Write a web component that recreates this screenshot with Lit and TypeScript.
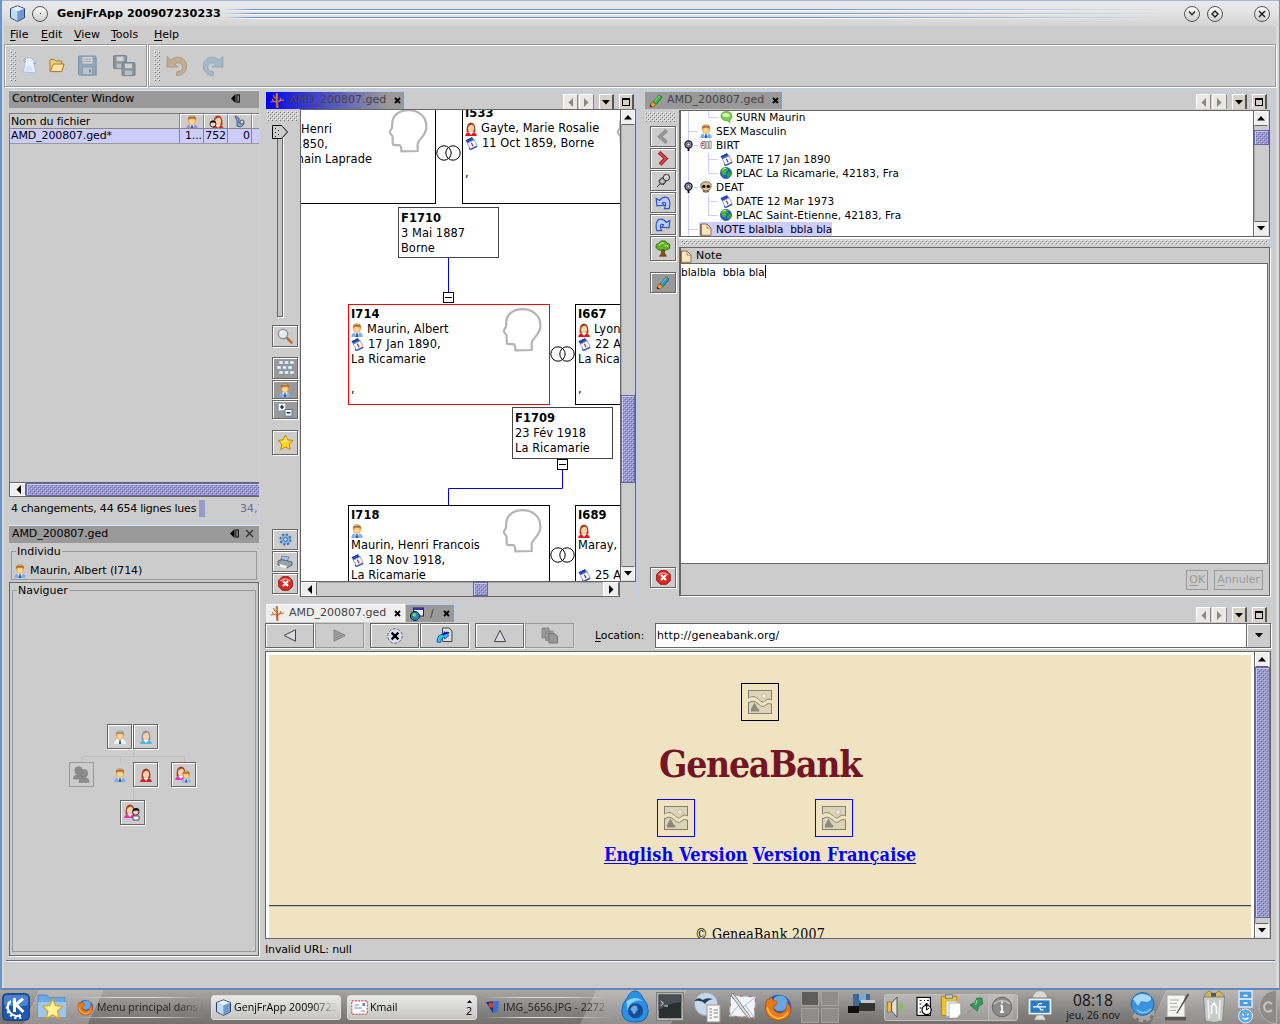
import { LitElement, html, svg, css, nothing } from "lit";
import { customElement } from "lit/decorators.js";
import { styleMap } from "lit/directives/style-map.js";

type Box = { x: number; y: number; w?: number; h?: number };

const at = (b: Box) =>
  styleMap({
    left: `${b.x}px`,
    top: `${b.y}px`,
    ...(b.w ? { width: `${b.w}px` } : {}),
    ...(b.h ? { height: `${b.h}px` } : {}),
  });

const icon = (w: number, h: number, vb: string, body: unknown) =>
  html`<svg class="ic" width=${w} height=${h} viewBox=${vb}>${body}</svg>`;

/* ---------- people ---------- */
const manBody = (hair = "#a8672e", coat = "#7fb0e6", face = "#f0a04c", x = 0, y = 0) => svg`
  <g transform="translate(${x} ${y})">
    <path d="M0.3 14 Q0.2 9.8 4 9.2 L8 9.2 Q11.8 9.8 11.7 14Z" fill=${coat}/>
    <path d="M3.2 9.2 L6 13.8 L8.8 9.2Z" fill="#fff"/>
    <path d="M5.4 10 h1.2 l.5 4 h-2.2z" fill="#2d5c9c"/>
    <ellipse cx="6" cy="5.6" rx="3.9" ry="4.1" fill=${face}/>
    <ellipse cx="6" cy="6.4" rx="2.7" ry="2.4" fill="#ffd890"/>
    <path d="M1.8 5.6 Q1.4 0.4 6 .4 Q10.6 .4 10.2 5.6 Q9.6 3.8 8.4 3.4 L3.6 3.4 Q2.4 3.8 1.8 5.6Z" fill=${hair}/>
    <path d="M3.4 1.8 Q6 .8 8.4 1.8" stroke="#fff" stroke-opacity=".5" stroke-width=".9" fill="none"/>
  </g>`;
const womanBody = (hair = "#9c3a22", coat = "#e01818", x = 0, y = 0) => svg`
  <g transform="translate(${x} ${y})">
    <path d="M1.6 10.6 Q.9 .4 6 .4 Q11.1 .4 10.4 10.6Z" fill=${hair}/>
    <path d="M.2 14 Q.2 11 3.4 10.4 L8.6 10.4 Q11.8 11 11.8 14Z" fill=${coat}/>
    <path d="M3.2 9.6 L6 13 L8.8 9.6Z" fill="#fff"/>
    <ellipse cx="6" cy="6" rx="3.1" ry="4" fill="#fdd0a4"/>
    <path d="M3 6 Q4 2.8 7.6 2.6 L9.2 5 Q8.8 1.2 6 1.1 Q3 1.2 3 6Z" fill=${hair}/>
  </g>`;
const man = (hair?: string, coat?: string) => icon(12, 14, "0 0 12 14", manBody(hair, coat));
const woman = (hair?: string, coat?: string) => icon(12, 14, "0 0 12 14", womanBody(hair, coat));

const couple = icon(17, 17, "0 0 17 17", svg`${womanBody("#a3402a", "#ec2fb4", 0, 0)}<g transform="translate(6 4.5) scale(.86)">${manBody("#a8672e", "#8ab8f0")}</g>`);
const child = icon(17, 17, "0 0 17 17", svg`${womanBody("#a3402a", "#ec2fb4", 0, 0)}
  <circle cx="11.8" cy="8" r="3.2" fill="#f9c4d0" stroke="#111" stroke-width=".8"/><path d="M8.4 7.4 Q8.6 4 12 4 Q15.4 4 15.4 7 Q12 5.6 8.4 7.4Z" fill="#111"/>
  <path d="M9 12 h6 v4 h-6z" fill="#fff" stroke="#333" stroke-width=".8"/>`);
const motherBaby = icon(14, 13, "0 0 14 13", svg`<g transform="translate(3 0)">${womanBody("#a3402a", "#e42828", 0, 0)}</g>
  <circle cx="4" cy="9" r="3" fill="#fdd8d0" stroke="#111" stroke-width=".8"/><path d="M1 8.4 Q1 5.4 4 5.4 Q7 5.4 7 8 Q4 6.800 1 8.4Z" fill="#111"/>`);
const shadowPair = icon(17, 17, "0 0 17 17", svg`<g fill="#8c8c8c" stroke="#7c7c7c" stroke-width=".6">
  <circle cx="5.5" cy="4.5" r="3.8"/><path d="M.5 13 Q.5 8.6 5.5 8.6 Q10 8.6 10.5 13Z"/>
  <circle cx="11" cy="7.4" r="3.8"/><path d="M6 16.4 Q6 11.6 11 11.6 Q16 11.6 16 16.4Z"/></g>`);

/* ---------- record icons ---------- */
const dateIcon = icon(13, 13, "0 0 13 13", svg`
  <path d="M.6 3.8 L7 .6 L9.6 3 L2.6 6.6Z" fill="#2850c0"/><path d="M.8 3.6 L7.2 .6" stroke="#0d2b80" stroke-width="1"/>
  <path d="M2.2 6.2 L9.2 2.8 L12.2 8.6 L5.4 12Z" fill="#f4f7fc" stroke="#7d93c4" stroke-width=".8"/>
  <path d="M6.4 5.8 L8 9.2" stroke="#c22" stroke-width="1.2"/><path d="M4 9.8 L5.4 12 L12 8.8 L12.5 10 L6 13 L4.2 12.4Z" fill="#2c50b0"/>`);
const globe = icon(12, 12, "0 0 12 12", svg`<circle cx="6" cy="6" r="5.6" fill="#1d66c8" stroke="#173f70" stroke-width=".6"/>
  <path d="M1 4.2 Q3 .6 7 .8 L8.2 3 L6 5 L6.4 7 L4 8.4 L2 6.6Z" fill="#44b834"/><path d="M8 5.4 L11.2 5 Q11.4 8.8 8.4 10.8 L7 8Z" fill="#38a42c"/>
  <path d="M2.4 3 Q4 1 6 1.4" stroke="#b8f07c" fill="none"/>`);
const bubble = icon(13, 12, "0 0 13 12", svg`<path d="M6.5 .6 C10 .6 12 2.6 12 5 C12 7.6 10.8 8.8 9.6 9.2 L10.2 11.4 L7 9.6 C3 9.8 1 7.6 1 5 C1 2.6 3 .6 6.5 .6Z" fill="#7ccf4c" stroke="#4b9a2a" stroke-width=".7"/>
  <ellipse cx="6" cy="4" rx="3.6" ry="2" fill="#d7f6b8"/>`);
const birth = icon(12, 10, "0 0 12 10", svg`<path d="M1 3 Q2 1 5 1.4 L5 8.4 Q2 9 1 7Z" fill="#fff" stroke="#555" stroke-width=".8"/><path d="M1.8 3.4 h2 M1.8 5.4 h2" stroke="#d23" stroke-width="1.3"/>
  <path d="M6 1.6 h2.4 v7 h-2.4z M9 1 h2.2 v7.4 h-2.2z" fill="#e4e4e4" stroke="#777" stroke-width=".7"/>`);
const skull = icon(12, 12, "0 0 12 12", svg`<path d="M6 .8 C10 .8 11.4 3 11.2 5.2 C11 7.4 9.6 8 9 8.2 L8.6 11 L3.4 11 L3 8.2 C2.4 8 1 7.4 .8 5.2 C.6 3 2 .8 6 .8Z" fill="#d8c49a" stroke="#5b4525" stroke-width=".8"/>
  <circle cx="3.8" cy="5.4" r="1.7" fill="#1c1408"/><circle cx="8.2" cy="5.4" r="1.7" fill="#1c1408"/><path d="M4.4 9 v1.6 M6 9 v1.6 M7.6 9 v1.6" stroke="#3a2a10" stroke-width=".7"/>`);
const noteIcon = icon(12, 13, "0 0 12 13", svg`<path d="M1 1 H7 L11 5 V12.3 H1Z" fill="#fbe6c0" stroke="#8f6a3c" stroke-width=".9"/><path d="M7 1 V5 H11Z" fill="#fff" stroke="#8f6a3c" stroke-width=".8"/><path d="M1 1 V12.3" stroke="#5d4020"/>`);
const pen = (a: string, b: string) => icon(14, 14, "0 0 14 14", svg`<path d="M4 8 L10.4 1 L13 3.2 L7 10.6Z" fill=${a} stroke=${b} stroke-width=".8"/><path d="M5.2 7.4 L10.8 1.6" stroke="#dff" stroke-width=".7" stroke-opacity=".8"/>
  <path d="M4 8 L7 10.6 L4.4 12.8 L1.2 12.6 L1.6 9.6Z" fill="#f0a030" stroke="#8a4a10" stroke-width=".7"/><path d="M1 10.8 L1 13 L3.4 13Z" fill="#222"/>`);
const treeIcon = icon(15, 15, "0 0 15 15", svg`<g stroke="#c87a3c" fill="none" stroke-linecap="round"><path d="M7.4 14.4 Q6.6 8 6.8 4 L6.8 1" stroke-width="2.2"/><path d="M6.8 9 Q3 9 2.4 6.4 M6.8 6 Q4 5 3.6 2.6 M1 9 L4 8.4 M7 9.4 Q10.6 8.4 11 5.4 M10 7.6 L13.6 7" stroke-width="1.2"/></g>
  <path d="M7.8 13 Q7.4 8 7.8 5" stroke="#8a4418" stroke-width=".6" fill="none"/>`);
const headShape = (x: number, y: number) => html`<svg class="abs" style=${at({ x, y })} width="40" height="45" viewBox="0 0 40 45">
  <path d="M4.3 13.5 C5 5.5 12 1.2 20.5 1.2 C31 1.2 38.4 8 38.4 17.5 C38.4 27 30.6 29.5 29.6 35 L29.8 42 L13.4 42.4 Q13.4 37 11.4 36 Q7.6 36.4 5 35.6 Q4.6 34 4.6 27.4 L1.8 23.6 Q1.6 22.6 4 18.6 Z" fill="none" stroke="#b4b4b4" stroke-width="2.2" stroke-linejoin="round"/></svg>`;
const cube = (s: number) => icon(s, s, "0 0 16 16", svg`<path d="M8 .8 L14.6 3.4 V12 L8 15.4 L1.4 12 V3.4Z" fill="#8db4dd" stroke="#243c66" stroke-width=".9"/>
  <path d="M8 1.2 L14 3.6 L8 6 L2 3.6Z" fill="#e5f2fc"/><path d="M8 6 V15 L2 11.8 V3.8Z" fill="#c3dcf2"/><path d="M8 6 V15 L14 11.8 V3.8Z" fill="#6f99cf"/>`);
const broken = html`<svg class="ic" width="26" height="26" viewBox="0 0 26 26"><rect x="1.5" y="1.5" width="23" height="23" fill="#dcd3b8" stroke="#857f71"/>
  <circle cx="17" cy="7" r="2.4" fill="#f3e9cc" stroke="#b8b09a" stroke-width=".7"/>
  <path d="M1 10 Q6 5 11 10 T18 12 Q22 8 25 12" fill="none" stroke="#8a8474" stroke-width="1"/>
  <path d="M0 12 Q6 7.500 11 12.400 T18 14.200 Q22 11.400 26 13.500" fill="none" stroke="#efe3c1" stroke-width="3"/>
  <path d="M1 14.6 Q6 9.800 11 14.6 T18 16.4 Q22 13 25 16" fill="none" stroke="#8a8474" stroke-width="1"/>
  <path d="M7.5 13.5 L11 20 H12.2 V22.500 H4 V20 Z" fill="#8f8979"/></svg>`;

const arrow = (dir: "up" | "down" | "left" | "right", fill = "#000") => {
  const p = { up: "M4 0 L8 4.5 H0Z", down: "M0 0 H8 L4 4.5Z", left: "M5 0 V9 L.5 4.5Z", right: "M0 0 V9 L4.5 4.5Z" }[dir];
  const v = dir === "up" || dir === "down";
  return icon(v ? 8 : 5, v ? 5 : 9, v ? "0 0 8 5" : "0 0 5 9", svg`<path d=${p} fill=${fill}/>`);
};
const tabX = (c = "#000") => icon(7, 7, "0 0 7 7", svg`<path d="M1 1 L6 6 M6 1 L1 6" stroke=${c} stroke-width="1.8"/>`);
const dockMark = icon(9, 9, "0 0 9 9", svg`<path d="M4.5 0 V9 L0 4.5Z" fill="#000"/><rect x="5.9" y=".9" width="2.4" height="7.2" fill="none" stroke="#000"/>`);
const redClose = icon(15, 15, "0 0 15 15", svg`<path d="M4.5 .7 H10.5 L14.3 4.5 V10.5 L10.5 14.3 H4.5 L.7 10.5 V4.5Z" fill="#dc2820" stroke="#8e100c" stroke-width=".9"/><path d="M2.4 5 Q7 1 12.4 5" stroke="#ff9a8c" stroke-width="1.4" fill="none"/><path d="M5 5 L10 10 M10 5 L5 10" stroke="#fff" stroke-width="2.2"/>`);

const curl = (c: string, dark: string, flip = false) => icon(22, 22, "0 0 22 22", svg`<g transform=${flip ? "translate(22 0) scale(-1 1)" : ""}>
  <path d="M1 1.500 L5 5 Q10 .6 16 3 Q22 7 20.400 14 Q17.6 20.800 10.6 20.8 V16.8 Q15.600 16.4 16.400 12.600 Q16.600 8.600 13 7.800 Q10.600 7.600 9 9 L12 12 H1Z" fill=${c} stroke=${dark} stroke-width=".8"/></g>`);
const blueCurl = (flip = false) => icon(16, 15, "0 0 22 22", svg`<g transform=${flip ? "translate(22 0) scale(-1 1)" : ""}>
  <path d="M1 5 L6 8 Q11 1 18 4 Q23 9 20 20 H13 Q17 11 12.6 10.6 Q10.6 10.6 10 11.8 L13 15 L2 16Z" fill="#b9cdf8" stroke="#3450c8" stroke-width="1.7"/></g>`);

const diskette = icon(22, 22, "0 0 22 22", svg`<path d="M2 3 H20 V21 H4 Z" fill="#aeb2b6"/><rect x="1.5" y="1" width="17.5" height="19" rx="1" fill="#93a8bb" stroke="#7c90a3"/>
  <rect x="5" y="1.5" width="11" height="7.5" fill="#d4d8da" stroke="#8497a8" stroke-width=".7"/><path d="M6.5 4 H14.5 M6.5 6.4 H14.5" stroke="#96a0a8"/>
  <rect x="5.5" y="12" width="10" height="7.6" fill="#bac4cc" stroke="#8497a8" stroke-width=".7"/><rect x="12" y="14.4" width="2" height="3" fill="#7c90a3"/>`);
const twoDisks = icon(23, 22, "0 0 23 22", svg`${[[0.6, 0.6], [9, 7.6]].map(([x, y]) => svg`<g transform="translate(${x} ${y})"><rect width="13" height="13" rx="1" fill="#8c949b" stroke="#747b82" stroke-width=".9"/><rect x="3" y="1" width="7" height="4.6" fill="#cdd1d3"/><rect x="3" y="8" width="7" height="4.6" fill="#b8bfc4"/></g>`)}`);
const newFile = icon(15, 17, "0 0 15 17", svg`<path d="M3 1 H8.6 L12 3.4 L12.4 8 L13.8 15.8 L.8 15 L2.8 9Z" fill="#eaf1fc" stroke="#a6bce0" stroke-width=".9"/><path d="M1 3 L4 5 M11 6 L14 7 M2.4 1.4 L4 3" stroke="#7ea3e0" stroke-width="1"/><path d="M4 10 L8 8 L11.500 14.500 L3 14Z" fill="#d3e0f8"/>`);
const openFile = icon(16, 15, "0 0 16 15", svg`<path d="M1 13.4 V2.4 Q1 1.4 2 1.4 H5.4 L7 3 H12.6 V6" fill="#f0cf84" stroke="#a8782c"/><path d="M1.4 13.6 L4.4 6 H15 L12.8 13.6Z" fill="#fbe3a6" stroke="#a8782c"/>`);

const gear = icon(13, 13, "0 0 13 13", svg`<circle cx="6.5" cy="6.5" r="4.9" fill="#86b2e4" stroke="#3f6fae" stroke-dasharray="2.2 1.6" stroke-width="2.4"/><circle cx="6.5" cy="6.5" r="4.2" fill="#86b2e4"/><circle cx="6.5" cy="6.5" r="1.9" fill="#cfe0f4" stroke="#34629c"/>`);
const printer = icon(16, 14, "0 0 16 14", svg`<path d="M5 1 L12 2 L10 7 L4 5Z" fill="#a5c3e8" stroke="#55606c" stroke-width=".6"/><path d="M1 6 L5 4.6 L15 7 V10 L10 13 L1 10Z" fill="#9ca2a8" stroke="#3c4044" stroke-width=".7"/><path d="M3 9 L10 11 L9 13.4 L2.4 11.6Z" fill="#f2f2f2"/>`);
const lens = icon(16, 16, "0 0 16 16", svg`<path d="M9.4 9.4 L14.6 14.6" stroke="#c46a24" stroke-width="2.4" stroke-linecap="round"/><circle cx="6" cy="6" r="4.7" fill="#e4eaee" stroke="#8c8c8c" stroke-width="1.3"/><path d="M3.4 5.6 Q4 3.4 6 3.2" stroke="#fff" fill="none" stroke-width="1.2"/>`);
const star = (s: number) => icon(s, s, "0 0 17 17", svg`<path d="M8.5 1 L10.8 5.8 L16 6.5 L12.2 10.2 L13.2 15.6 L8.5 13 L3.8 15.6 L4.8 10.2 L1 6.5 L6.2 5.8Z" fill="#ffd61c" stroke="#bd7d00" stroke-width=".9"/><path d="M8.5 3 L9.8 6.8 L5 8" stroke="#fff6b0" fill="none"/>`);
const bricks = icon(17, 16, "0 0 17 16", svg`<g fill="#f4f8fc" stroke="#7b98b8" stroke-width=".5">${[[2, 1], [7.5, 1], [13, 1], [0, 6], [5.5, 6], [11, 6], [2, 11], [7.5, 11], [13, 11]].map(([x, y]) => svg`<rect x=${x} y=${y} width="4" height="3"/>`)}</g>`);
const plusMinus = icon(15, 14, "0 0 15 14", svg`<rect x=".5" y=".5" width="7" height="7" fill="#fff" stroke="#9ab6d2"/><path d="M4 2 V6 M2 4 H6" stroke="#000" stroke-width="1.2"/><rect x="7" y="6.5" width="7" height="6.6" fill="#fff" stroke="#4878a8"/><path d="M8.6 9.8 H12.4" stroke="#000" stroke-width="1.3"/>`);
const chevron = (dir: "l" | "r", c: string, d: string) => icon(12, 15, "0 0 12 15", svg`<path d=${dir === "l" ? "M9.6 1.4 L3 7.5 L9.6 13.6" : "M2 1.4 L8.8 7.5 L3 13.6"} fill="none" stroke=${d} stroke-width="3.6"/><path d=${dir === "l" ? "M9.6 1.4 L3 7.5 L9.6 13.6" : "M2 1.4 L8.8 7.5 L3 13.6"} fill="none" stroke=${c} stroke-width="2"/>`);
const pin = icon(15, 15, "0 0 15 15", svg`<path d="M1 14 L5 10" stroke="#333"/><path d="M3.4 7 L8 11.4" stroke="#333" stroke-width="2.4"/><ellipse cx="6.6" cy="8" rx="3.4" ry="2.8" fill="#bbb" stroke="#333" transform="rotate(-40 6.6 8)"/><circle cx="10.4" cy="4.6" r="3.2" fill="#ccc" stroke="#333"/><path d="M9 4.6 Q9.6 3 11.4 3.2" stroke="#fff" fill="none"/>`);
const oak = icon(16, 17, "0 0 16 17", svg`<path d="M6.4 8 H9.6 L9.4 13 L11.4 16.2 H4.6 L6.6 13Z" fill="#8a5018" stroke="#4a2808" stroke-width=".6"/><path d="M3 9.4 Q.4 8.4 1 5.6 Q1.4 3.4 3.8 3.4 Q5 .6 8 .8 Q11 .4 12.2 3 Q15.4 3.4 15 6.6 Q15 9.4 12 9.4 Q10.6 11.4 8 9.6 Q5 11.4 3 9.4Z" fill="#62b024" stroke="#2c6410" stroke-width=".8"/><path d="M4 5.4 Q6 2 9 3.4 M9.6 6 Q12 4.4 13 6.6" stroke="#c0e86c" fill="none" stroke-width="1.2"/>`);

/* ---------- desktop panel icons ---------- */
const firefox = (s: number) => icon(s, s, "0 0 28 28", svg`<circle cx="14" cy="14" r="12.4" fill="#2a5cb0"/><circle cx="15.5" cy="10" r="7.6" fill="#6aa6e0"/>
  <path d="M3 6 Q5 7 7 4 Q8 7 12 8 Q14 10 11 12 Q8 13 10 17 Q14 21 19 18 Q23 15 22 9 Q27 13 25.6 19 Q22 27 13 26.6 Q2 25 1.4 14 Q1.4 9 3 6Z" fill="#e87818" stroke="#a8430c" stroke-width=".6"/><path d="M3 14 Q5 23 14 24.6 Q20 24 23 19" stroke="#fcc040" stroke-width="1.6" fill="none"/>`);
const kmenu = icon(28, 28, "0 0 28 28", svg`<rect x=".7" y=".7" width="26.6" height="26.6" rx="4" fill="#1d58ae" stroke="#0f397c"/><rect x="2" y="2" width="24" height="11" rx="3" fill="#5d93d8" opacity=".7"/>
  <path d="M12.500 5 V19 M21 5.6 L14 11.500 L21.400 19" stroke="#fff" stroke-width="3" fill="none"/><path d="M9 8 A7.500 7.500 0 0 0 9 20.4 A8.6 8.6 0 0 0 19 22" stroke="#fff" stroke-width="2" fill="none"/><path d="M7.600 9.600 A7.500 7.500 0 0 0 8 21 A8.6 8.6 0 0 0 19.500 23.500" stroke="#fff" stroke-width="3" stroke-dasharray="2 2.600" fill="none"/>`);
const starFolder = icon(32, 28, "0 0 32 28", svg`<path d="M2 2 H11 L13 4.6 H29 V23 H2Z" fill="#6ea9e6" stroke="#4a86c6" stroke-width=".8"/><path d="M2 9 H30 V24 H2Z" fill="#9cc6f2"/><g transform="translate(5.6 5) scale(1.3)"><path d="M8.5 1 L10.8 5.8 L16 6.5 L12.2 10.2 L13.2 15.6 L8.5 13 L3.8 15.6 L4.8 10.2 L1 6.5 L6.2 5.8Z" fill="#fff09a" stroke="#e0a010" stroke-width=".9"/></g>`);
const stamp = icon(17, 15, "0 0 17 15", svg`<rect x=".8" y=".8" width="15.4" height="13.4" fill="#fff" stroke="#d05048" stroke-width="1.2" stroke-dasharray="2 1.2"/><path d="M3.4 5 H8 M3.4 8 H11 M10 11 H14" stroke="#6a8cc4"/><rect x="11.5" y="3" width="2.5" height="3" fill="#5c84d0"/>`);
const photo = icon(15, 14, "0 0 15 14", svg`<path d="M1 2 L14 1 L13 12 L8 13Z" fill="#3a70d0"/><path d="M1 2 L8 1.6 L8 13Z" fill="#20306a"/><circle cx="6" cy="5" r="2.6" fill="#d43c30"/>`);
const drop = icon(30, 34, "0 0 30 36", svg`<path d="M15 1 Q20 1 23 8 Q29 14 29 22 Q29 34 15 34 Q1 34 1 22 Q1 14 7 8 Q10 1 15 1Z" fill="#2a90e4" stroke="#1564b4"/><path d="M6 12 Q15 5 24 12 Q19 10 15 12 Q9 14 7 22Z" fill="#8ed0fa"/><circle cx="15.6" cy="22" r="8" fill="#1a4c94"/><path d="M10 20 Q13 15 17 17 L18 21 L14 26Z" fill="#6aa8e4"/>`);
const terminal = icon(28, 31, "0 0 28 31", svg`<rect x=".6" y=".6" width="26.8" height="28" fill="#b9bbb9" stroke="#777"/><rect x="2.6" y="2.6" width="22.8" height="23.6" fill="#2b2e2f"/><path d="M2.6 2.6 H25.4 V10 Q10 12 2.6 18Z" fill="#4a4e50"/><path d="M4.6 9 L7.4 11.4 L4.6 13.8 M8.4 14 H12" stroke="#eee" fill="none"/>`);
const office = icon(29, 34, "0 0 29 34", svg`<circle cx="13" cy="14" r="11.6" fill="#c9d7e6" stroke="#96a8bc"/><path d="M1 11 Q5 6 10 10 Q13 7 20 9 Q14 10 12 14 Q9 10 1 11Z" fill="#26415e"/><rect x="14" y="15" width="13" height="17" fill="#f6f6f6" stroke="#999"/><path d="M16.4 19 H19 M16.4 22 H19 M16.4 25 H19 M16.4 28 H19 M20.6 20 H25 M20.6 23 H25 M20.6 27 H25" stroke="#777" stroke-width=".9"/>`);
const letter = icon(30, 32, "0 0 30 32", svg`<g transform="rotate(4 15 16)"><rect x="2" y="5" width="25" height="21" fill="#f2f5fa" stroke="#9fb0c8"/><rect x="2" y="5" width="25" height="21" fill="none" stroke="#cc6464" stroke-width="1.4" stroke-dasharray="3 6"/><path d="M2 5 L14 17 L27 5 M2 26 L11 14 M27 26 L17 14" stroke="#b4c2d6" fill="none"/></g><path d="M5 2 L21 24 L23.6 29 L19 26 L3 4Z" fill="#dcdcdc" stroke="#6e6e6e" stroke-width=".8"/>`);
const devices = icon(29, 28, "0 0 29 28", svg`<rect x="6" y="1" width="17" height="17" fill="#3f6894"/><path d="M12 1 H19 V7 L15.5 10 L12 7Z" fill="#7fa8d0"/><path d="M1 13 H12 V20 H1Z" fill="#111"/><path d="M12 10 H28 V18 H12Z" fill="#333"/><rect x="14" y="7" width="14" height="3" fill="#c8c8c8"/><path d="M16 21 H28 V26 H16Z" fill="#777" opacity=".5"/>`);
const speaker = icon(18, 24, "0 0 18 24", svg`<rect x=".6" y="7" width="4" height="10" fill="#f0b83c" stroke="#8a6010" stroke-width=".6"/><path d="M4.6 8 L10 2 V22 L4.6 16Z" fill="#e0e0e0" stroke="#555"/><path d="M12 8 Q14 12 12 16 M14 7 Q16.6 12 14 17" stroke="#72c836" fill="none" stroke-width="1.3"/>`);
const calendar = icon(17, 22, "0 0 17 22", svg`<rect x="1" y="1.4" width="13.4" height="18" fill="#fff" stroke="#000" stroke-width="1.1"/><path d="M3.6 4.4 h2 M8 4.4 h1 M11 4.4 h2 M3.6 8 h1.6 M3.6 12 h2 M3.6 16 h1.6" stroke="#000"/><circle cx="10.6" cy="14" r="4.6" fill="#fff" stroke="#000" stroke-width="1.2"/><path d="M10.6 14 V7 M10.6 14 L13 12 M10.6 7 L8.6 9.4 M10.6 7 L12.6 9.4" stroke="#000" fill="none"/>`);
const clipboard = icon(22, 26, "0 0 22 27", svg`<rect x="1" y="2.4" width="16" height="20" rx="1" fill="#f0c428" stroke="#a67c10"/><rect x="5.4" y=".8" width="7" height="4" fill="#c4c4c4" stroke="#666" stroke-width=".7"/><path d="M6 7.4 H18 V19 L14 23 H6Z" fill="#f2f2ee" stroke="#aaa" stroke-width=".7"/><path d="M9 9.4 H21 V20.6 L17 25 H9Z" fill="#fff" stroke="#999" stroke-width=".7"/>`);
const pushpin = icon(20, 24, "0 0 20 24", svg`<path d="M1 21 L8 13" stroke="#999" stroke-width="1.6"/><path d="M5 10 L12 16 Q14 13 12.6 12 L17.6 9 L17 3 L12 3 L9.6 8.6 Q8 7.6 5 10Z" fill="#3a9a5a" stroke="#1f6a3c" stroke-width=".7"/><path d="M12 5 L10.6 10" stroke="#a4e4b8"/>`);
const info = icon(22, 22, "0 0 22 22", svg`<circle cx="11" cy="11" r="9.8" fill="#8b8b8b" stroke="#666"/><path d="M3 8 Q11 1 19 8" stroke="#c4c4c4" stroke-width="1.6" fill="none"/><path d="M11 9.4 V16 M11 5.4 V7.4 M9 16.2 H13 M9.4 9.6 H11" stroke="#fff" stroke-width="1.7"/>`);
const usb = icon(28, 34, "0 0 28 34", svg`<circle cx="14" cy="8" r="7.4" fill="#dadada" stroke="#999"/><rect x="2" y="8" width="24" height="17" rx="1" fill="#f0f0f0" stroke="#777"/><rect x="4.4" y="10.4" width="19.2" height="12.4" fill="#2c7cc4"/><path d="M7 16.8 H20 M11 16.8 L13 13.6 H16 M13 16.8 L15 19.8 H17.6" stroke="#fff" fill="none" stroke-width="1.2"/><path d="M11 25 H17 L20 30 H8Z" fill="#ddd" stroke="#888" stroke-width=".6"/>`);
const netGlobe = icon(31, 34, "0 0 31 34", svg`<circle cx="16" cy="21" r="9" fill="#a9a9a9" stroke="#a4a4a4" stroke-width="5" stroke-dasharray="4 3"/><circle cx="15.6" cy="14" r="11.4" fill="#3a94dc" stroke="#2468a8"/><path d="M6 9 Q12 1 23 6 Q26 10 20 12 L14 11 L11 16Z" fill="#a6daf8"/><path d="M10 20 Q16 26 24 19" stroke="#88c8f4" fill="none" stroke-width="1.6"/>`);
const notes = icon(26, 32, "0 0 26 32", svg`<path d="M3 4 H21 V26 H3Z" fill="#f4f4f2" stroke="#a0a09c"/><path d="M6 9 H15 M6 12.4 H13 M6 16 H14 M6 19.4 H12" stroke="#aaa"/><path d="M24 2 L13 21 L12 23 L13.6 22 L25 4Z" fill="#4a4a4a"/><path d="M1 26 H22 V29.4 H1Z" fill="#585858"/>`);
const bin = icon(24, 34, "0 0 24 34", svg`<path d="M3 4 L7 1 L12 4 L17 1 L22 5 V9 H2Z" fill="#d2b45c" stroke="#77663a" stroke-width=".6"/><path d="M9 3 H14 V8 H9Z" fill="#555"/><path d="M1.4 7 H22.6 L20.6 31 Q12 34 3.4 31Z" fill="#c9cbca" stroke="#858585"/><path d="M6 10 L7 29 M18 10 L17 29" stroke="#efefef" stroke-width="1.6"/><path d="M9.6 24 V17 L12 13 L14.4 17 V24" stroke="#fff" fill="none" stroke-width="1.5"/>`);
const drawers = icon(15, 34, "0 0 15 34", svg`<rect x="1" y="1" width="13" height="16" fill="#4d9be0" stroke="#e8f2fa" stroke-width="1.3"/><path d="M1 9 H14" stroke="#fff" stroke-width="1.4"/><path d="M5.4 5.6 H9.6 M5.4 13 H9.6" stroke="#fff" stroke-width="1.6"/><circle cx="7.5" cy="26" r="7" fill="#5fa9e6" stroke="#e8f2fa"/><path d="M4.4 24 L6 25.6 M10.6 23.6 L9 25.2 M4.6 28 Q7.5 30.4 10.4 27.8" stroke="#fff" fill="none" stroke-width="1.3"/>`);

@customElement("app-root")
export class AppRoot extends LitElement {
  static styles = css`
    :host { display: block; width: 1280px; height: 1024px; overflow: hidden; position: relative;
      font: 11px/14px "DejaVu Sans", Verdana, sans-serif; color: #000; background: #ccc; }
    * { box-sizing: border-box; }
    div { white-space: nowrap; }
    span { white-space: pre; }
    .ic { display: block; flex: none; }
    .abs { position: absolute; display: block; }
    .row { display: flex; align-items: center; }
    :where(.row > i, .row > span, .toolbar > i, .hdr > i) { flex: none; }
    .col { display: flex; flex-direction: column; }
    .grow { flex: 1; min-width: 0; min-height: 0; }
    u { text-underline-offset: 2px; text-decoration-thickness: 1px; }

    /* window frame */
    .win { height: 990px; border-left: 2px solid #6b94c8; border-right: 1px solid #6b94c8; border-bottom: 2px solid #6287b8;
      background: #ccc; box-shadow: inset 2px 0 #d6d9dc, inset -3px 0 #d8dadc; }
    .title { height: 26px; padding: 1px 7px 0; background: linear-gradient(#9fb8d4 0, #9fb8d4 1px, #e9e9e9 1px, #e3e3e3 50%, #d3d3d3); }
    .title b { font-size: 11.2px; margin-left: 9px; letter-spacing: .04px; }
    .stripes { height: 10px; flex: 1; margin: 0 8px 0 3px; background:
      linear-gradient(#6a90c8 0 1px, #fff 1px 2px, transparent 2px 4px, #6a90c8 4px 5px, #fff 5px 6px, transparent 6px 8px, #6a90c8 8px 9px, #fff 9px 10px);
      -webkit-mask: linear-gradient(90deg, transparent, #000 3%, #000 60%, transparent 99%); }
    .round { width: 16px; height: 16px; border-radius: 50%; border: 1px solid #555; background: linear-gradient(#fafafa, #d0d0d0); display: grid; place-items: center; flex: none; }
    .menu { height: 18px; padding-left: 8px; }
    .menu span { display: block; }
    .toolrow { height: 43px; gap: 1px; padding: 0 3px 0 2px; }
    .toolbar { height: 43px; border: 1px solid #999; box-shadow: inset 1px 1px #fff, 1px 1px #fff; display: flex; align-items: center; padding: 0 0 0 5px; }
    .grip { background:
      conic-gradient(from 0deg at 1px 1px, transparent 75%, #fff 0) 0 0/4px 4px,
      conic-gradient(from 0deg at 1px 1px, transparent 75%, #777 0) 1px 1px/4px 4px,
      conic-gradient(from 0deg at 1px 1px, transparent 75%, #fff 0) 2px 2px/4px 4px,
      conic-gradient(from 0deg at 1px 1px, transparent 75%, #777 0) 3px 3px/4px 4px; }
    .main { height: 872px; padding: 3px 9px 0 6px; display: flex; gap: 4px; }

    /* left column */
    .left { width: 252px; padding-left: 1px; border-right: 1px solid #c3d3e3; flex: none; }
    .hdr { height: 18px; background: #999; border-top: 1px solid #dbe6f0; padding: 0 5px 2px 3px; display: flex; align-items: center; flex: none; width: 250px; }
    .hdr span { flex: 1; font-size: 11px; letter-spacing: -.08px; }
    .table { margin-top: 5px; height: 369px; border-top: 1px solid #777; border-left: 1px solid #777; width: 250px; flex: none; }
    .trow { display: grid; grid-template-columns: 170px 24px 24px 24px 7px; height: 14px; overflow: hidden; letter-spacing: -.12px; }
    .trow > div { border-right: 1px solid #888; overflow: hidden; height: 14px; line-height: 15px; padding-left: 1px; }
    .trow > .hi { display: flex; justify-content: center; align-items: flex-start; border-left: 1px solid #fff; border-top: 1px solid #fff; padding: 0; }
    .trow > div:last-child { border-right: 0; }
    .trow.data { background: #ccf; height: 16px; border-top: 1px solid #888; border-bottom: 1px solid #999; }
    .trow.data > div { height: 15px; line-height: 14px; }
    .trow .num { text-align: right; padding-right: 1px; }
    .status { height: 23px; padding-left: 2px; width: 250px; border-bottom: 1px solid #b8cfe5; overflow: hidden; flex: none; padding-top: 1px; }
    .status > span:first-child { letter-spacing: -.24px; width: 185px; }
    .bar { width: 6px; height: 17px; background: #99c; margin-left: 3px; }
    .pct { color: #6a6aa4; margin-left: 35px; }
    .fs { border: 1px solid #999; flex: none; }
    .legend { background: #ccc; display: block; width: max-content; margin: -7px 0 0 4px; padding: 0 1px; }
    .navbox { margin-top: 2px; height: 374px; width: 250px; border: 1px solid #666; box-shadow: 1px 1px #fff; padding: 7px 2px 3px 2px; flex: none; }
    .navbox .fs { height: 362px; }
    .nav { position: absolute; width: 25px; height: 25px; border: 1px solid #666; box-shadow: 1px 1px #fff, inset 1px 1px #fff; display: grid; place-items: center; }
    .nav.off { border-color: #999; box-shadow: none; } .nav.plain { border: 0; box-shadow: none; }
    .navfree { position: relative; height: 300px; margin-top: -1px; }

    /* docks */
    .right { width: 1008px; flex: none; }
    .docks { height: 510px; gap: 7px; display: flex; flex: none; }
    .tabs { height: 19px; display: flex; align-items: flex-end; padding: 0 1px 0 2px; border-top: 1px solid #c0d2e4; flex: none; }
    .tab { height: 18px; display: flex; align-items: center; padding: 0 4px; background: #999; color: #444; border-top: 1px solid #b8cfe5; border-right: 1px solid #b8cfe5; flex: none; }
    .tab span { margin: 0 8px 2px 4px; }
    .tab.hot { background: linear-gradient(90deg, #0000e8, #1a1ae0 12%, #999 88%); }
    .tab.lit { background: #eee; border-color: #fff; }
    .tb { width: 15px; height: 15px; background: #eae8e4; border: 1px solid #fff; border-right-color: #888; border-bottom: 0; display: grid; place-items: center; margin-right: 1px; flex: none; }
    .tb.on { background: #d6d2c8; border-right: 2px solid #555; margin-left: 4px; }
    .sq { width: 8px; height: 8px; border: 1px solid #000; border-top-width: 2px; }
    .tree { width: 373px; border-right: 1px solid #b8cfe5; height: 508px; flex: none; }
    .side { padding-left: 3px; flex: none; }
    .sb { width: 26px; border: 1px solid #666; box-shadow: 1px 1px #fff, inset 1px 1px #fff; display: grid; place-items: center; flex: none; margin-left: 5px; }
    .sb.on { background: #999; }
    .slider { height: 195px; margin: 3px 0 0 5px; width: 17px; position: relative; flex: none; }
    .track { margin: 2px 0 0 5px; width: 6px; height: 191px; border: 1px solid #666; box-shadow: 1px 1px #fff; background: #c4c4c4; }
    .canvas { position: relative; width: 320px; height: 472px; background: #fff; overflow: hidden; border-top: 1px solid #666; border-left: 1px solid #666; font-size: 11.4px; line-height: 15px; letter-spacing: .06px; flex: none; }
    .card { position: absolute; border: 1px solid #000; padding: 2px; overflow: hidden; }
    .card.red { border-color: #f00; } .card.fam { border-color: #444; padding-top: 3px; background: #fff; }
    .card b { display: block; font-size: 11.5px; height: 15px; }
    .ln { height: 15px; display: flex; align-items: center; gap: 4px; }
    .fold { position: absolute; width: 11px; height: 11px; border: 1px solid #000; background: #fff; display: grid; place-items: center; }
    .fold::before { content: ""; width: 7px; height: 1px; background: #000; }

    /* scrollbars */
    .vs { width: 16px; border: 1px solid #666; border-top-color: #777; background: #ccc; display: flex; flex-direction: column; box-shadow: inset 1px 0 #aaa; flex: none; }
    .hs { height: 16px; border: 1px solid #666; background: #ccc; display: flex; box-shadow: inset 0 1px #aaa; flex: none; }
    .sa { background: #eee; display: grid; place-items: center; flex: none; width: 14px; height: 15px; border: 1px solid #fff; border-bottom-color: #666; }
    .hs .sa { width: 16px; height: 14px; border-bottom-color: #fff; border-right-color: #666; }
    .vs .sa:last-child { border-top-color: #666; border-bottom-color: #ddd; }
    .thumb { border: 1px solid #66a; box-shadow: inset 1px 1px #ccf; flex: none; background:
      conic-gradient(from 0deg at 1px 1px, transparent 75%, #c4c4f4 0) 0 0/4px 4px,
      conic-gradient(from 0deg at 1px 1px, transparent 75%, #66a 0) 1px 1px/4px 4px,
      conic-gradient(from 0deg at 1px 1px, transparent 75%, #c4c4f4 0) 2px 2px/4px 4px,
      conic-gradient(from 0deg at 1px 1px, transparent 75%, #66a 0) 3px 3px/4px 4px, #99c; }
    .thumb.fill { flex: 1; border-right: 0; }

    /* editor */
    .editor { width: 627px; border-right: 1px solid #c3cfe0; flex: none; }
    .gtree { height: 127px; border: 1px solid #666; border-width: 1px 1px 1px 2px; background: #fff; display: flex; box-shadow: 0 2px #fff; flex: none; }
    .lines { flex: 1; overflow: hidden; position: relative; font-size: 10.5px; line-height: 14px; letter-spacing: .06px; }
    .item { height: 14px; display: flex; align-items: center; position: relative; }
    .item:first-of-type { margin-top: -1px; }
    .item .lab { display: flex; align-items: center; height: 14px; }
    .item .pic { width: 16px; display: grid; place-items: center; height: 14px; margin-left: -1px; }
    .item.sel .lab { background: #ccf; }
    .item.sel span { letter-spacing: 0; }
    .wires { left: 0; top: 0; }
    .split { height: 10px; margin-right: 2px; padding: 3px 0 2px 2px; flex: none; }
    .split i { display: block; height: 5px; }
    .note { height: 349px; border: 1px solid #666; border-left-width: 2px; box-shadow: 1px 1px #fff; flex: none; }
    .notehd { height: 15px; gap: 4px; padding-top: 1px; }
    .notehd svg { margin-left: -1px; }
    .area { height: 301px; margin-right: 1px; border: 1px solid #666; border-left: 0; background: #fff; padding-top: 1px; font-size: 10.5px; display: flex; align-items: flex-start; }
    .caret { width: 1px; height: 13px; background: #000; }
    .btns { height: 31px; justify-content: flex-end; gap: 6px; padding-right: 6px; }
    .btn { height: 20px; border: 1px solid #999; color: #999; padding: 0 2px; display: flex; align-items: center; }

    /* browser */
    .browser { height: 356px; flex: none; }
    .btool { height: 26px; padding-left: 1px; align-items: flex-start; padding-top: 1px; flex: none; }
    .bb { width: 49px; height: 25px; border: 1px solid #666; box-shadow: 1px 1px #fff, inset 1px 1px #fff; display: grid; place-items: center; margin-right: 1px; flex: none; }
    .bb.off { border-color: #999; box-shadow: 1px 1px #ddd; }
    .loc { width: 592px; height: 25px; border: 1px solid #666; background: #fff; padding-left: 1px; line-height: 24px; box-shadow: 0 1px #fff; flex: none; letter-spacing: .1px; }
    .drop { width: 24px; height: 25px; border: 1px solid #666; border-left: 0; box-shadow: inset 1px 1px #fff, 1px 1px #fff; display: grid; place-items: center; flex: none; }
    .view { height: 288px; width: 1006px; margin: 3px 0 0 1px; border: 1px solid #666; background: #fff; display: flex; flex: none; }
    .page { width: 982px; margin: 3px 3px 0 3px; background: #efe3c1; overflow: hidden; display: flex; flex-direction: column; align-items: center; flex: none; font-family: "DejaVu Serif Condensed", "DejaVu Serif", serif; font-stretch: condensed; }
    .img { width: 38px; height: 38px; border: 1px solid #000; display: grid; place-items: center; flex: none; }
    .img.l { border-color: #00f; }
    .h1 { font-weight: bold; font-size: 37px; line-height: 44px; letter-spacing: -1.3px; color: #731525; margin-top: 21px; flex: none; }
    .links { display: flex; gap: 5px; margin-top: 13px; font-size: 18px; font-weight: bold; line-height: 24px; letter-spacing: .13px; color: #00f; flex: none; }
    .links > div { display: flex; flex-direction: column; align-items: center; gap: 6px; }
    .links span { text-decoration: underline; text-decoration-thickness: 1px; text-underline-offset: 2px; }
    .hr { align-self: stretch; height: 2px; background: #444; border-bottom: 1px solid #c0c0c0; margin-top: 38px; flex: none; }
    .foot { font-size: 14px; line-height: 20px; letter-spacing: .28px; margin-top: 17px; flex: none; }
    .msg { height: 20px; padding-left: 1px; line-height: 21px; letter-spacing: -.15px; flex: none; }
    .bottom { height: 28px; margin: 1px 4px 0 4px; border-top: 1px solid #668; box-shadow: inset 0 1px #fff; }

    /* desktop panel */
    .task { height: 34px; background: linear-gradient(115deg, transparent 0 3%, rgba(255,255,255,.22) 3% 8%, transparent 8% 46%, rgba(255,255,255,.22) 46% 53%, transparent 53% 90%, rgba(255,255,255,.2) 90%), linear-gradient(#a8a6a4, #858381 60%, #737170);
      display: flex; align-items: center; font-family: "Open Sans", "Noto Sans", sans-serif; font-size: 10.6px; }
    .tk { width: 130px; height: 25px; margin-right: 6px; display: flex; align-items: center; gap: 3px; padding: 0 4px; overflow: hidden; color: #222; border-radius: 3px; flex: none; }
    .tk span { overflow: hidden; flex: 1; -webkit-mask: linear-gradient(90deg, #000 75%, transparent); }
    .tk.on { background: linear-gradient(#e8e8e7, #c6c5c4); border: 1px solid #ddd; color: #000; padding: 0 3px; gap: 2px; }
    .tk.flat { padding: 0 0 0 2px; background: linear-gradient(90deg, transparent, #ddd 30% 60%, transparent) 0 2px/100% 1px no-repeat, linear-gradient(90deg, transparent, #ddd 30% 60%, transparent) 0 22px/100% 1px no-repeat; }
    .count { width: 8px; display: flex; flex-direction: column; align-items: center; gap: 3px; line-height: 10px; padding-top: 2px; }
    .pager { display: grid; grid-template-columns: 18px 18px; grid-auto-rows: 15px; gap: 2px; width: 38px; }
    .pager i { background: #8f8d8c; border: 1px solid #a5a3a2; } .pager i:first-child { background: #5e5d5d; }
    .tray { width: 134px; height: 27px; border: 1px solid #c2c1c0; background: rgba(255,255,255,.28); border-radius: 3px; display: flex; align-items: center; padding-left: 2px; flex: none; }
    .tray .last { border-left: 1px solid #bbb; padding-left: 2px; height: 25px; display: flex; align-items: center; background: rgba(255,255,255,.1); flex: none; }
    .clock { width: 62px; display: flex; flex-direction: column; align-items: center; color: #111; flex: none; }
    .clock div:first-child { font-size: 15.6px; height: 16px; line-height: 16px; }
    .clock div:last-child { line-height: 15px; }
    .cashew { width: 18px; height: 34px; border-radius: 18px 0 0 18px; background: #8d8b8a; border: 1px solid #b5b3b2; display: grid; place-items: center; flex: none; }
  `;

  private tabButtons() {
    return html`<div class="grow"></div>
      <div class="tb">${arrow("left", "#888")}</div><div class="tb">${arrow("right", "#888")}</div>
      <div class="tb on">${arrow("down")}</div><div class="tb on"><div class="sq"></div></div>`;
  }

  private menu(w: number, k: string, rest: string) {
    return html`<span style=${styleMap({ width: `${w}px` })}><u>${k}</u>${rest}</span>`;
  }

  private side(h: number, mt: number, pic: unknown, on = false) {
    return html`<div class="sb ${on ? "on" : ""}" style=${styleMap({ height: `${h}px`, marginTop: `${mt}px` })}>${pic}</div>`;
  }

  private rings(x: number, y: number) {
    return html`<svg class="abs" style=${at({ x, y })} width="26" height="16" viewBox="0 0 26 16"><g fill="none" stroke="#000"><circle cx="8" cy="8" r="7.2"/><circle cx="17" cy="8" r="7.2"/></g></svg>`;
  }

  private sbar(top: number, size: number) {
    return html`<div class="sa">${arrow("up")}</div>
      <div style=${styleMap({ height: `${top}px` })}></div>
      <div class="thumb" style=${styleMap({ height: `${size}px` })}></div>
      <div class="grow"></div><div class="sa">${arrow("down")}</div>`;
  }

  private left() {
    return html`<div class="left col">
      <div class="hdr"><span>ControlCenter Window</span>${dockMark}<i style="width:14px"></i></div>
      <div class="table">
        <div class="trow"><div>Nom du fichier</div><div class="hi">${man("#a8672e", "#a58ad8")}</div>
          <div class="hi">${motherBaby}</div><div class="hi">${icon(12, 13, "0 0 12 13", svg`<path d="M1 1 L5 3 L5 8 L9 6 L10 9 L7 12 L3 11 L3 6Z" fill="#8aa6cc" stroke="#3a5478" stroke-width=".9"/><circle cx="8" cy="7" r="2" fill="#d8e4f4" stroke="#456"/>`)}</div><div class="hi"></div></div>
        <div class="trow data"><div>AMD_200807.ged*</div><div class="num">1...</div><div class="num">752</div><div class="num">0</div><div></div></div>
      </div>
      <div class="hs" style="width:250px;border-right:0;height:15px"><div class="sa" style="height:13px">${arrow("left")}</div><div class="thumb fill"></div></div>
      <div class="status row"><span>4 changements, 44 654 lignes lues</span><i class="bar"></i><span class="pct">34,7</span></div>
      <div class="hdr" style="margin-top:5px"><span>AMD_200807.ged</span>${dockMark}<i style="width:6px"></i>${icon(9, 9, "0 0 9 9", svg`<path d="M1 1 L8 8 M8 1 L1 8" stroke="#333" stroke-width="1.3"/>`)}</div>
      <div class="fs" style="margin:8px 0 0 2px;width:246px;height:29px"><span class="legend">Individu</span>
        <div class="row" style="gap:4px;padding:5px 0 0 2px">${man()}<span style="letter-spacing:-.1px">Maurin, Albert (I714)</span></div></div>
      <div class="navbox"><div class="fs"><span class="legend">Naviguer</span>
        <div class="navfree">
          <svg class="abs" style="left:0;top:0" width="240" height="300"><path d="M120.500 152 V159.500 M69.500 166 V159.500 H171.500 V166 M107.500 159.500 V166 M120.500 190 V204" fill="none" stroke="#bfbfbf"/></svg>
          ${[
            [94, 127, man("#8c8c8c", "#f2f2f2"), ""], [120, 127, woman("#8e9498", "#48b4f4"), ""],
            [56, 165, shadowPair, "off"], [94, 165, man(), "plain"], [120, 165, woman(), ""],
            [158, 165, couple, ""], [107, 203, child, ""],
          ].map(([x, y, p, c]) => html`<div class="nav ${c}" style=${at({ x: x as number, y: y as number })}>${p}</div>`)}
        </div></div></div>
    </div>`;
  }

  private treePanel() {
    const card = (x: number, y: number, w: number, h: number, id: string, lines: unknown[], cls = "") =>
      html`<div class="card ${cls}" style=${at({ x, y, w, h })}><b>${id}</b>${lines.map((l) => html`<div class="ln">${l}</div>`)}</div>`;
    return html`<div class="tree col">
      <div class="tabs"><div class="tab hot" style="width:139px">${treeIcon}<span>AMD_200807.ged</span>${tabX()}</div>${this.tabButtons()}</div>
      <div class="row" style="align-items:stretch">
        <div class="side col" style="width:36px;height:488px">
          <div class="grip" style="height:10px;width:31px;margin-top:2px;flex:none"></div>
          <div class="slider"><div class="track"></div>
            <svg class="abs" style="left:0;top:0" width="17" height="17"><path d="M.5 1.5 H9.5 L15.500 8 L9.500 14.500 H.5Z" fill="#ccc" stroke="#000"/><path d="M3.500 4 v1 M6.500 6 v1 M3.500 8 v1 M6.500 10 v1 M3.500 12 v1" stroke="#333"/></svg></div>
          ${this.side(22, 6, lens)}${this.side(22, 10, bricks, true)}${this.side(19, 1, man(), true)}${this.side(19, 1, plusMinus, true)}
          ${this.side(25, 11, star(17))}${this.side(21, 74, gear)}${this.side(21, 1, printer)}${this.side(21, 1, redClose)}
        </div>
        <div class="col">
          <div class="canvas">
            ${card(-67, -7, 202, 101, "I532", [])}
            <div class="abs" style=${at({ x: 0, y: 12, w: 60 })}>Henri</div>
            <div class="abs" style=${at({ x: -60, y: 27, w: 87 })}><div style="text-align:right">1850,</div></div>
            <div class="abs" style=${at({ x: -60, y: 42, w: 131 })}><div style="text-align:right">Romain Laprade</div></div>
            ${headShape(87, -1)}${this.rings(135, 35)}
            ${card(161, -7, 201, 101, "I533", [html`${woman()}<span>Gayte, Marie Rosalie</span>`, html`${dateIcon}<span>11 Oct 1859, Borne</span>`, nothing, ","])}
            ${headShape(315, -1)}
            ${card(97, 97, 101, 51, "F1710", ["3 Mai 1887", "Borne"], "fam")}
            <svg class="abs" style="left:0;top:0" width="320" height="472"><path d="M147.500 148 V182 M261.500 359 V378.500 H147.500 V395" stroke="#0000f0" fill="none"/></svg>
            <i class="fold" style=${at({ x: 142, y: 182 })}></i>
            ${card(47, 194, 202, 101, "I714", [html`${man()}<span>Maurin, Albert</span>`, html`${dateIcon}<span>17 Jan 1890,</span>`, "La Ricamarie", nothing, ","], "red")}
            ${headShape(201, 198)}${this.rings(249, 236)}
            ${card(274, 194, 202, 101, "I667", [html`${woman()}<span>Lyonnet, Marie</span>`, html`${dateIcon}<span>22 Aoû 1894,</span>`, "La Ricamarie", nothing, ","])}
            ${card(211, 297, 101, 52, "F1709", ["23 Fév 1918", "La Ricamarie"], "fam")}
            <i class="fold" style=${at({ x: 256, y: 349 })}></i>
            ${card(47, 395, 202, 101, "I718", [man(), "Maurin, Henri Francois", html`${dateIcon}<span>18 Nov 1918,</span>`, "La Ricamarie"])}
            ${headShape(201, 399)}${this.rings(249, 437)}
            ${card(274, 395, 202, 101, "I689", [woman(), "Maray, ", nothing, html`${dateIcon}<span>25 Avr 1920</span>`])}
          </div>
          <div class="hs"><div class="sa" style="width:16px">${arrow("left")}</div><i style="width:156px"></i><div class="thumb" style="width:15px"></div><div class="grow"></div><div class="sa">${arrow("right")}</div></div>
        </div>
        <div class="vs" style="height:473px">${this.sbar(270, 88)}</div>
      </div>
    </div>`;
  }

  private editor() {
    const rows: [number, unknown, string, boolean?][] = [
      [38, bubble, "SURN Maurin"], [18, man(), "SEX Masculin"], [18, birth, "BIRT"],
      [38, dateIcon, "DATE 17 Jan 1890"], [38, globe, "PLAC La Ricamarie, 42183, Fra"], [18, skull, "DEAT"],
      [38, dateIcon, "DATE 12 Mar 1973"], [38, globe, "PLAC Saint-Etienne, 42183, Fra"], [18, noteIcon, "NOTE blalbla  bbla bla", true],
    ];
    const knob = (y: number) => svg`<circle cx="7.500" cy=${y} r="3.600" fill="#9999cc" stroke="#111" stroke-width="1.200"/><circle cx="7.500" cy=${y} r="1.500" fill="#fff" stroke="#222" stroke-width=".8"/><path d="M7.500 ${y + 3.6} V${y + 6.5}" stroke="#000" stroke-width="1.800"/>`;
    return html`<div class="editor col" style="height:508px">
      <div class="tabs" style="padding-left:1px;padding-right:2px"><div class="tab" style="width:138px">${pen("#30c030", "#0a6a10")}<span>AMD_200807.ged</span>${tabX()}</div>${this.tabButtons()}</div>
      <div class="row" style="align-items:stretch">
        <div class="col" style="width:35px;padding-left:1px;flex:none">
          <div class="grip" style="height:10px;width:31px;margin-top:3px;flex:none"></div>
          ${this.side(21, 4, chevron("l", "#999", "#888"))}${this.side(21, 1, chevron("r", "#e84040", "#901010"))}${this.side(21, 1, pin)}${this.side(21, 1, blueCurl())}
          ${this.side(21, 1, blueCurl(true))}${this.side(25, 1, oak)}${this.side(21, 11, pen("#2aa0c0", "#0a4a6a"), true)}${this.side(21, 274, redClose)}
        </div>
        <div class="col" style="width:591px;flex:none">
          <div class="gtree" style="margin-top:1px">
            <div class="lines">
              <svg class="abs wires" width="60" height="130"><path d="M7.500 0 V125 M27.500 0 V6.500 H37 M8 20.500 H17 M13 34.500 H17 M27.500 42 V62.500 H37 M27.500 48.500 H37 M13 76.500 H17 M27.500 84 V104.500 H37 M27.500 90.500 H37 M8 118.500 H17" stroke="#ccccff" fill="none"/>${knob(33.5)}${knob(75.5)}</svg>
              ${rows.map(([pad, p, t, sel]) => html`<div class="item ${sel ? "sel" : ""}" style=${styleMap({ paddingLeft: `${pad}px` })}><div class="lab"><div class="pic">${p}</div><span style="margin-left:2px">${t}</span></div></div>`)}
            </div>
            <div class="vs" style="border-width:0 0 0 1px;width:16px">${this.sbar(4, 15)}</div>
          </div>
          <div class="split"><i class="grip"></i></div>
          <div class="note">
            <div class="notehd row">${noteIcon}<span>Note</span></div>
            <div class="area"><span>blalbla  bbla bla</span><i class="caret"></i></div>
            <div class="btns row"><div class="btn"><u>O</u>K</div><div class="btn"><u>A</u>nnuler</div></div>
          </div>
        </div>
      </div>
    </div>`;
  }

  private browser() {
    return html`<div class="browser col" style="margin-top:3px">
      <div class="tabs" style="padding-right:4px"><div class="tab lit" style="width:139px">${treeIcon}<span>AMD_200807.ged</span>${tabX()}</div>
        <div class="tab" style="width:49px;margin-left:1px">${icon(14, 14, "0 0 14 14", svg`<rect x="3.500" y="1" width="10" height="8" fill="#eef" stroke="#223"/><path d="M3.500 2 H13.500" stroke="#33a" stroke-width="2"/><circle cx="5" cy="9" r="4.500" fill="#28b" stroke="#013"/><path d="M2 8 Q4 5 6 7 L5 10Z" fill="#9d3"/>`)}<span style="margin:0 9px 0 6px">/</span>${tabX()}</div>${this.tabButtons()}</div>
      <div class="btool row">
        <div class="bb">${icon(14, 13, "0 0 14 13", svg`<path d="M12.500 .8 V12.200 L1 6.500Z" fill="#d8d8e0" stroke="#444"/>`)}</div>
        <div class="bb off" style="margin-right:6px">${icon(14, 13, "0 0 14 13", svg`<path d="M1 .8 V12.200 L12.500 6.500Z" fill="#999" stroke="#888"/>`)}</div>
        <div class="bb">${icon(16, 16, "0 0 16 16", svg`<circle cx="8" cy="8" r="7.200" fill="#dde" stroke="#667" stroke-dasharray="3 1.500"/><path d="M4.600 4.600 L11.400 11.400 M11.400 4.600 L4.600 11.400" stroke="#000" stroke-width="2.200"/>`)}</div>
        <div class="bb" style="margin-right:6px">${icon(18, 17, "0 0 18 17", svg`<path d="M6.500 1 H13 L16 4 V14.500 H6.500Z" fill="#ddd" stroke="#444"/><path d="M1 15 Q1 7 8 7 V4.600 L13 8.600 L8.600 12 V10.400 Q5 10.400 4.600 15.400Z" fill="#2cc8f0" stroke="#114488" stroke-width=".8"/><path d="M7 8.400 Q9 5 13 6" stroke="#11c" stroke-width="1.800" fill="none"/>`)}</div>
        <div class="bb">${icon(14, 14, "0 0 14 14", svg`<path d="M7 1.400 L12.600 12.600 H1.400Z" fill="#d8d8e0" stroke="#444"/>`)}</div>
        <div class="bb off">${icon(18, 17, "0 0 18 17", svg`<g fill="#999" stroke="#888"><path d="M1 1 H8 V11 H1Z M4.500 4 H12 V13.500 H4.500Z" /><path d="M8 6.500 H13.500 L16.500 9 V16 H8Z" stroke="#777"/></g>`)}</div>
        <span style="width:80px;padding:6px 0 0 20px;font-size:10.8px"><u>L</u>ocation:</span>
        <div class="loc">http://geneabank.org/</div><div class="drop">${arrow("down")}</div>
      </div>
      <div class="view">
        <div class="page">
          <div class="img" style="margin-top:28px">${broken}</div>
          <div class="h1">GeneaBank</div>
          <div class="links"><div><div class="img l">${broken}</div><span>English Version</span></div><div><div class="img l">${broken}</div><span>Version Française</span></div></div>
          <div class="hr"></div>
          <div class="foot">© GeneaBank 2007</div>
        </div>
        <div class="vs" style="border-width:0 0 0 1px;width:16px">${this.sbar(0, 251)}</div>
      </div>
      <div class="msg">Invalid URL: null</div>
    </div>`;
  }

  private taskbar() {
    const g = (w: number) => html`<i style=${styleMap({ width: `${w}px`, flex: "none" })}></i>`;
    return html`<div class="task">
      ${g(2)}${kmenu}${g(6)}${starFolder}${g(7)}
      <div class="tk flat">${firefox(17)}<span>Menu principal dans la</span></div>
      <div class="tk on">${cube(17)}<span>GenjFrApp 200907230233</span></div>
      <div class="tk on">${stamp}<span>Kmail</span><div class="count">${icon(5, 3, "0 0 5 3", svg`<path d="M2.500 0 L5 3 H0Z" fill="#111"/>`)}<div>2</div></div></div>
      <div class="tk flat">${photo}<span>IMG_5656.JPG - 2272</span></div>
      ${g(1)}${drop}${g(6)}${terminal}${g(9)}${office}${g(6)}${letter}${g(6)}${firefox(29)}${g(8)}
      <div class="pager"><i></i><i></i><i></i><i></i></div>${g(8)}${devices}${g(8)}
      <div class="tray">${speaker}${g(11)}${calendar}${g(7)}${clipboard}${g(3)}${pushpin}${g(3)}<div class="last">${info}</div></div>
      ${g(8)}${usb}${g(8)}
      <div class="clock"><div>08:18</div><div>jeu, 26 nov</div></div>
      ${g(3)}${netGlobe}${g(6)}${notes}${g(12)}${bin}${g(12)}${drawers}${g(6)}<div class="cashew">${icon(12, 14, "0 0 12 14", svg`<path d="M10 4 Q6 .6 3 4 Q1 7.500 3.400 10.500 Q6.500 13 10 10" fill="none" stroke="#c8c8c8" stroke-width="2"/>`)}</div>
    </div>`;
  }

  render() {
    return html`
      <div class="win">
        <div class="title row">${cube(17)}<i style="width:6px"></i><div class="round"><i style="width:1px;height:1px;background:#222"></i></div><b>GenjFrApp 200907230233</b>
          <i class="stripes"></i>
          <div class="round">${icon(8, 5, "0 0 8 5", svg`<path d="M1 .6 L4 3.800 L7 .6" fill="none" stroke="#222" stroke-width="1.400"/>`)}</div><i style="width:7px"></i>
          <div class="round">${icon(8, 8, "0 0 8 8", svg`<path d="M4 1 L7 4 L4 7 L1 4Z" fill="none" stroke="#222" stroke-width="1.400"/>`)}</div><i style="width:31px"></i>
          <div class="round" style="margin-right:2px">${icon(8, 8, "0 0 8 8", svg`<path d="M1 1 L7 7 M7 1 L1 7" stroke="#222" stroke-width="1.500"/>`)}</div></div>
        <div class="menu row">${this.menu(31, "F", "ile")}${this.menu(33, "E", "dit")}${this.menu(37, "V", "iew")}${this.menu(43, "T", "ools")}${this.menu(40, "H", "elp")}</div>
        <div class="toolrow row">
          <div class="toolbar" style="width:143px;flex:none"><i class="grip" style="width:6px;height:30px"></i><i style="width:6px"></i>${newFile}<i style="width:12px"></i>${openFile}<i style="width:12px"></i>${diskette}<i style="width:14px"></i>${twoDisks}</div>
          <div class="toolbar grow"><i class="grip" style="width:6px;height:30px"></i><i style="width:6px"></i>${curl("#c2ad94", "#a8937a")}<i style="width:14px"></i>${curl("#a4b8c6", "#8ea4b4", true)}</div>
        </div>
        <div class="main">
          ${this.left()}
          <div class="right col">
            <div class="docks">${this.treePanel()}${this.editor()}</div>
            ${this.browser()}
          </div>
        </div>
        <div class="bottom"></div>
      </div>
      ${this.taskbar()}`;
  }
}
